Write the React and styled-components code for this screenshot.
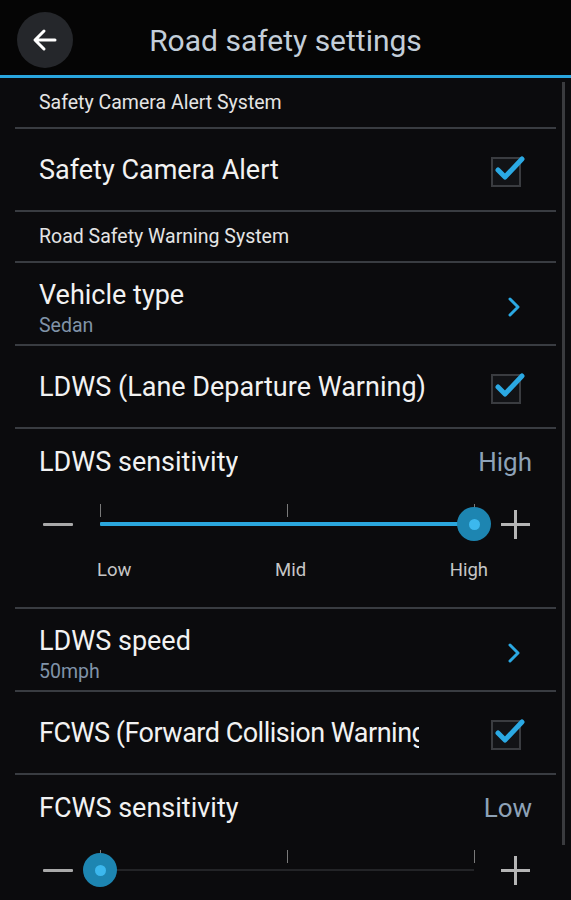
import React from 'react';
import styled, { createGlobalStyle } from 'styled-components';

const GlobalStyle = createGlobalStyle`
  html, body {
    margin: 0;
    padding: 0;
    background: #0b0b0d;
  }
  body {
    font-family: Roboto, "Noto Sans", "Liberation Sans", sans-serif;
    width: 571px;
    height: 900px;
    overflow: hidden;
  }
  * {
    box-sizing: border-box;
  }
`;

const Screen = styled.div`
  width: 571px;
  height: 900px;
  background: #0b0b0d;
  overflow: hidden;
`;

const Header = styled.header`
  height: 78px;
  display: flex;
  align-items: center;
  padding: 5px 17px 0;
  background: #050505;
  border-bottom: 3px solid #29a6df;
`;

const BackButton = styled.button`
  width: 56px;
  height: 56px;
  border: none;
  border-radius: 50%;
  background: #25272b;
  display: flex;
  align-items: center;
  justify-content: center;
  padding: 0;
  flex-shrink: 0;
`;

const HeaderTitle = styled.h1`
  flex: 1;
  margin: 0;
  text-align: center;
  font-size: 30px;
  font-weight: 400;
  color: #c3ced9;
`;

const Spacer = styled.div`
  width: 56px;
  flex-shrink: 0;
`;

const Body = styled.div`
  display: flex;
`;

const List = styled.div`
  width: 541px;
  margin-left: 15px;
`;

const Scrollbar = styled.div`
  width: 3px;
  height: 763px;
  margin: 4px 0 0 6px;
  background: #3a3b3e;
`;

const SectionHeader = styled.div`
  height: 51px;
  display: flex;
  align-items: center;
  padding-left: 24px;
  font-size: 19.5px;
  color: #e4e4e4;
  border-bottom: 2px solid #393c41;
`;

const Row = styled.div`
  height: 83px;
  display: flex;
  align-items: ${({ $top }) => ($top ? 'flex-start' : 'center')};
  padding: ${({ $top }) => ($top ? '17px' : '0')} ${({ $pr }) => $pr || 35}px 0 24px;
  border-bottom: 2px solid #393c41;
`;

const Texts = styled.div`
  flex: 1;
  min-width: 0;
  display: flex;
  flex-direction: column;
`;

const Label = styled.div`
  font-size: 27px;
  line-height: 30px;
  color: #f2f2f2;
  white-space: nowrap;
  overflow: hidden;
  max-width: ${({ $clip }) => ($clip ? `${$clip}px` : 'none')};
  letter-spacing: ${({ $clip }) => ($clip ? '-0.5px' : 'normal')};
`;

const Sub = styled.div`
  margin-top: 5px;
  font-size: 19.5px;
  line-height: 22px;
  color: #8093a8;
`;

const Value = styled.div`
  font-size: 26px;
  line-height: 30px;
  color: #8ea2b7;
`;

const CheckWrap = styled.div`
  position: relative;
  width: 30px;
  height: 30px;
  margin-top: 4px;
  flex-shrink: 0;
`;

const Box = styled.div`
  width: 30px;
  height: 30px;
  border: 2px solid #3a3c40;
  background: #121316;
`;

const Tick = styled.svg`
  position: absolute;
  left: 0;
  top: -6px;
`;

const Chevron = styled.svg`
  margin-top: 17px;
  flex-shrink: 0;
`;

const SensBlock = styled.div`
  border-bottom: 2px solid #393c41;
  padding-top: 15px;
  height: ${({ $h }) => $h}px;
`;

const SensTitle = styled.div`
  display: flex;
  justify-content: space-between;
  align-items: center;
  height: 36px;
  padding: 0 24px;
`;

const SliderLine = styled.div`
  display: grid;
  grid-template-columns: 30px 374px 30px;
  column-gap: 27px;
  align-items: center;
  height: 40px;
  margin-top: 24px;
  padding-left: 28px;
`;

const Minus = styled.div`
  height: 3px;
  background: #a9a9a9;
  border-radius: 1px;
`;

const Plus = styled.div`
  position: relative;
  width: 29px;
  height: 29px;
  &::before, &::after {
    content: '';
    position: absolute;
    background: #b5b5b5;
  }
  &::before {
    left: 0;
    right: 0;
    top: 13px;
    height: 3px;
  }
  &::after {
    top: 0;
    bottom: 0;
    left: 13px;
    width: 3px;
  }
`;

const Track = styled.div`
  position: relative;
  height: 40px;
`;

const Rail = styled.div`
  position: absolute;
  left: 0;
  right: 0;
  top: 19px;
  height: 2px;
  background: #232427;
`;

const Fill = styled.div`
  position: absolute;
  left: 0;
  top: 18px;
  height: 4px;
  background: #2ba7dd;
  border-radius: 1px;
`;

const Notch = styled.div`
  position: absolute;
  top: 0;
  width: 1px;
  height: 13px;
  background: #7a7a7a;
  margin-left: -0.5px;
`;

const Thumb = styled.div`
  position: absolute;
  top: 3px;
  width: 34px;
  height: 34px;
  margin-left: -17px;
  border-radius: 50%;
  background: #1d85b1;
  display: flex;
  align-items: center;
  justify-content: center;
  &::after {
    content: '';
    width: 11px;
    height: 11px;
    border-radius: 50%;
    background: #3cb8ee;
  }
`;

const Marks = styled.div`
  display: flex;
  justify-content: space-between;
  width: 391px;
  margin: 14px 0 0 82px;
  font-size: 18.5px;
  line-height: 24px;
  color: #c6c6c6;
`;

const Checkbox = () => (
  <CheckWrap>
    <Box />
    <Tick width="36" height="32" viewBox="0 0 36 32">
      <path d="M7 19 L14 26 L31 8" fill="none" stroke="#2ba9e3" strokeWidth="5" strokeLinecap="round" strokeLinejoin="round" />
    </Tick>
  </CheckWrap>
);

const Arrow = () => (
  <Chevron width="12" height="20" viewBox="0 0 12 20">
    <path d="M2 2 L10 10 L2 18" fill="none" stroke="#2ba9e3" strokeWidth="3" strokeLinecap="round" strokeLinejoin="round" />
  </Chevron>
);

const Slider = ({ value }) => {
  const pct = value * 50;
  return (
    <SliderLine>
      <Minus />
      <Track>
        <Rail />
        <Fill style={{ width: `${pct}%` }} />
        {[0, 50, 100].map(p => (
          <Notch key={p} style={{ left: `${p}%` }} />
        ))}
        <Thumb style={{ left: `${pct}%` }} />
      </Track>
      <Plus />
    </SliderLine>
  );
};

const Sensitivity = ({ title, level, value, height, showMarks }) => (
  <SensBlock $h={height}>
    <SensTitle>
      <Label>{title}</Label>
      <Value>{level}</Value>
    </SensTitle>
    <Slider value={value} />
    {showMarks && (
      <Marks>
        <span>Low</span>
        <span>Mid</span>
        <span>High</span>
      </Marks>
    )}
  </SensBlock>
);

export default function App() {
  return (
    <Screen>
      <GlobalStyle />
      <Header>
        <BackButton aria-label="Back">
          <svg width="26" height="24" viewBox="0 0 26 24">
            <path d="M23 12 H4 M12 3 L3 12 L12 21" fill="none" stroke="#ffffff" strokeWidth="3" strokeLinecap="round" strokeLinejoin="round" />
          </svg>
        </BackButton>
        <HeaderTitle>Road safety settings</HeaderTitle>
        <Spacer />
      </Header>
      <Body>
        <List>
          <SectionHeader>Safety Camera Alert System</SectionHeader>
          <Row>
            <Texts><Label>Safety Camera Alert</Label></Texts>
            <Checkbox />
          </Row>
          <SectionHeader>Road Safety Warning System</SectionHeader>
          <Row $top $pr={36}>
            <Texts>
              <Label>Vehicle type</Label>
              <Sub>Sedan</Sub>
            </Texts>
            <Arrow />
          </Row>
          <Row>
            <Texts><Label>LDWS (Lane Departure Warning)</Label></Texts>
            <Checkbox />
          </Row>
          <Sensitivity title="LDWS sensitivity" level="High" value={2} height={180} showMarks />
          <Row $top $pr={36}>
            <Texts>
              <Label>LDWS speed</Label>
              <Sub>50mph</Sub>
            </Texts>
            <Arrow />
          </Row>
          <Row>
            <Texts><Label $clip={380}>FCWS (Forward Collision Warning)</Label></Texts>
            <Checkbox />
          </Row>
          <Sensitivity title="FCWS sensitivity" level="Low" value={0} height={180} />
        </List>
        <Scrollbar />
      </Body>
    </Screen>
  );
}
